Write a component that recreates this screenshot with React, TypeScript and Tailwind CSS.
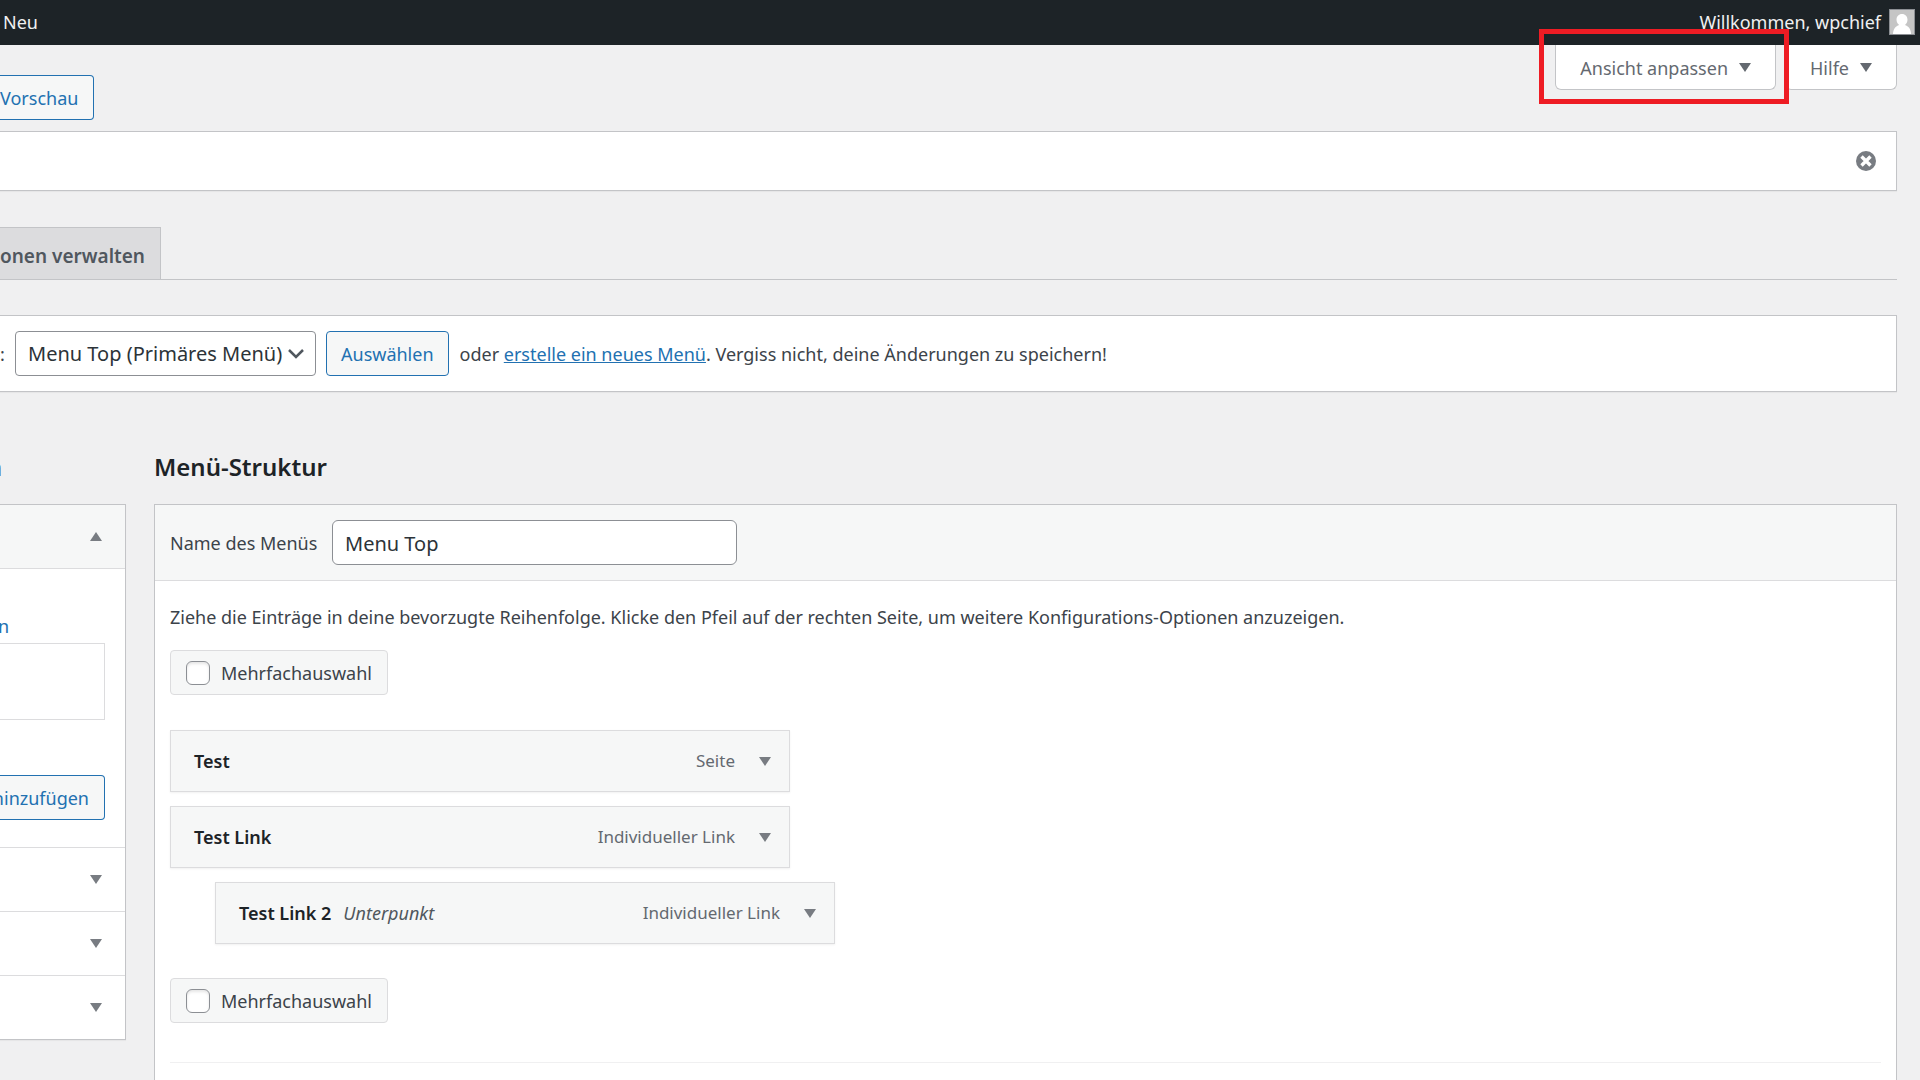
import type { ReactNode } from "react";

type MenuEntry = { title: string; kind: string; nested?: boolean };

const entries: MenuEntry[] = [
  { title: "Test", kind: "Seite" },
  { title: "Test Link", kind: "Individueller Link" },
  { title: "Test Link 2", kind: "Individueller Link", nested: true },
];

function Arrow({ up = false, className = "" }: { up?: boolean; className?: string }) {
  return (
    <svg viewBox="0 0 12 9" aria-hidden="true" className={`h-[9px] w-3 shrink-0 fill-current ${className}`}>
      <path d={up ? "M0 9 6 0l6 9z" : "M0 0h12L6 9z"} />
    </svg>
  );
}

function BulkSelect({ id }: { id: string }) {
  return (
    <label
      htmlFor={id}
      className="flex h-[45px] w-fit items-center gap-[11px] rounded-[4px] border border-[#dcdcde] bg-[#f6f7f7] px-[15px]"
    >
      <input
        id={id}
        type="checkbox"
        className="size-6 appearance-none rounded-[6px] border border-[#8c8f94] bg-white shadow-[inset_0_2px_3px_rgba(0,0,0,0.1)]"
      />
      Mehrfachauswahl
    </label>
  );
}

function MetaTab({ label, children }: { label: string; children?: ReactNode }) {
  return (
    <div className="relative">
      <button
        type="button"
        className="flex h-[45px] items-center gap-[11px] rounded-b-[6px] border border-t-0 border-[#c3c4c7] bg-white px-6 pt-px text-[#646970]"
      >
        {label}
        <Arrow />
      </button>
      {children}
    </div>
  );
}

function MenuItem({ entry }: { entry: MenuEntry }) {
  return (
    <li
      className={`flex h-[62px] w-[620px] items-center border border-[#dcdcde] bg-[#f6f7f7] pr-[18px] pl-[23px] shadow-[0_1px_2px_rgba(0,0,0,0.06)] ${
        entry.nested ? "ml-[45px]" : ""
      }`}
    >
      <span className="font-semibold text-[#1d2327]">{entry.title}</span>
      {entry.nested && <span className="ml-3 text-[#50575e] italic">Unterpunkt</span>}
      <span className="ml-auto text-[17px] text-[#646970]">{entry.kind}</span>
      <button type="button" aria-label={`${entry.title} bearbeiten`} className="ml-6 text-[#787c82]">
        <Arrow />
      </button>
    </li>
  );
}

function ClosedSection({ label }: { label: string }) {
  return (
    <button
      type="button"
      aria-label={label}
      className="flex h-16 w-full items-center justify-end border-t border-[#dcdcde] pr-[23px] text-[#787c82]"
    >
      <Arrow />
    </button>
  );
}

export default function App() {
  return (
    <div className="flex min-h-screen flex-col overflow-hidden bg-[#f0f0f1] font-['Noto_Sans','Open_Sans',sans-serif] text-[18px] leading-7 text-[#3c434a]">
      <header className="flex h-[45px] items-center justify-between bg-[#1d2327] pr-[5px] pb-px pl-[3px] text-[#f0f0f1]">
        <a href="#neu">Neu</a>
        <a href="#profil" className="flex items-center gap-2">
          Willkommen, wpchief
          <svg viewBox="0 0 26 26" aria-hidden="true" className="size-[26px]">
            <rect x=".5" y=".5" width="25" height="25" fill="#c5c5c5" stroke="#8c8f94" />
            <path d="M13 5c3.300 0 5.500 2.600 5.500 5.800 0 2.200-1 4.100-2.600 5.200 3.600.9 6 4.400 6.200 9H4c.2-4.600 2.600-8.100 6.200-9-1.600-1.100-2.700-3-2.700-5.200C7.500 7.600 9.700 5 13 5z" fill="#fff" />
          </svg>
        </a>
      </header>

      <main className="flex flex-1 flex-col pr-[23px]">
        <div className="flex items-start justify-between pb-[11px]">
          <button
            type="button"
            className="mt-[30px] h-[45px] rounded-r-[4px] border border-l-0 border-[#2271b1] bg-[#f6f7f7] pr-[15px] text-[#2271b1]"
          >
            Vorschau
          </button>
          <div className="flex gap-[9px]">
            <MetaTab label="Ansicht anpassen">
              <span className="pointer-events-none absolute -top-4 -right-[13px] -bottom-[14px] -left-4 z-10 border-[5px] border-[#ee1c24]" />
            </MetaTab>
            <MetaTab label="Hilfe" />
          </div>
        </div>

        <div className="flex h-[60px] items-center justify-end border border-l-0 border-[#c3c4c7] bg-white pr-5 shadow-[0_1px_1px_rgba(0,0,0,0.04)]">
          <button type="button" aria-label="Diese Meldung ausblenden">
            <svg viewBox="0 0 20 20" aria-hidden="true" className="size-5">
              <circle cx="10" cy="10" r="10" fill="#787c82" />
              <path d="m5.500 5.500 9 9m0-9-9 9" stroke="#fff" strokeWidth="3.400" />
            </svg>
          </button>
        </div>

        <nav className="mt-9 flex border-b border-[#c3c4c7]">
          <a
            href="#positionen"
            className="flex h-[52px] items-center border border-b-0 border-l-0 border-[#c3c4c7] bg-[#dcdcde] pt-1 pr-[15px] text-[19px] font-semibold text-[#50575e]"
          >
            onen verwalten
          </a>
        </nav>

        <form className="mt-[35px] flex h-[77px] items-center border border-l-0 border-[#c3c4c7] bg-white shadow-[0_1px_1px_rgba(0,0,0,0.04)]">
          <label htmlFor="menu" className="w-[15px]">
            :
          </label>
          <div className="relative">
            <select
              id="menu"
              className="h-[45px] w-[301px] appearance-none rounded-[4px] border border-[#8c8f94] bg-white pt-px pl-3 text-[20px] text-[#2c3338]"
            >
              <option>Menu Top (Primäres Menü)</option>
            </select>
            <svg
              viewBox="0 0 16 10"
              aria-hidden="true"
              className="pointer-events-none absolute top-[18px] right-3 h-[10px] w-4 fill-none stroke-[#50575e]"
            >
              <path d="m1 1 7 7 7-7" strokeWidth="2.500" />
            </svg>
          </div>
          <button
            type="button"
            className="ml-[10px] h-[45px] rounded-[4px] border border-[#2271b1] bg-[#f6f7f7] px-[14px] text-[#2271b1]"
          >
            Auswählen
          </button>
          <p className="ml-[11px]">
            oder{" "}
            <a href="#neues-menue" className="text-[#2271b1] underline">
              erstelle ein neues Menü
            </a>
            . Vergiss nicht, deine Änderungen zu speichern!
          </p>
        </form>

        <div className="mt-[59px] flex flex-1 gap-7">
          <aside className="w-[126px] shrink-0">
            <h2 className="h-[53px] text-[24px] leading-8 font-semibold text-[#1d2327]">
              <span className="flex w-[2px] justify-end overflow-hidden">n</span>
            </h2>
            <div className="border border-l-0 border-[#c3c4c7] bg-white shadow-[0_1px_1px_rgba(0,0,0,0.04)]">
              <button
                type="button"
                aria-label="Seiten"
                className="flex h-16 w-full items-center justify-end border-b border-[#dcdcde] bg-[#f6f7f7] pr-[23px] text-[#787c82]"
              >
                <Arrow up />
              </button>
              <div className="flex flex-col items-start pt-[43px] pr-5 pb-[27px]">
                <a href="#anzeigen" className="flex w-[9px] justify-end overflow-hidden text-[#2271b1]">
                  n
                </a>
                <div className="mt-[3px] h-[77px] w-full border border-l-0 border-[#dcdcde]" />
                <button
                  type="button"
                  className="mt-[55px] flex h-[45px] w-full items-center justify-end overflow-hidden rounded-r-[4px] border border-l-0 border-[#2271b1] bg-[#f6f7f7] pr-[15px] text-[#2271b1]"
                >
                  hinzufügen
                </button>
              </div>
              <ClosedSection label="Beiträge" />
              <ClosedSection label="Individuelle Links" />
              <ClosedSection label="Kategorien" />
            </div>
          </aside>

          <section className="flex flex-1 flex-col">
            <h2 className="h-[53px] text-[24px] leading-8 font-semibold text-[#1d2327]">Menü-Struktur</h2>
            <div className="flex-1 border border-b-0 border-[#c3c4c7] bg-white">
              <div className="flex h-[76px] items-center border-b border-[#dcdcde] bg-[#f6f7f7] pl-[15px]">
                <label htmlFor="menu-name" className="w-[162px] pt-px">
                  Name des Menüs
                </label>
                <input
                  id="menu-name"
                  type="text"
                  defaultValue="Menu Top"
                  className="h-[45px] w-[405px] rounded-[6px] border border-[#8c8f94] bg-white px-3 pt-[2px] text-[20px] text-[#2c3338]"
                />
              </div>
              <div className="px-[15px] pt-[22px] pb-4">
                <p className="mb-[19px]">
                  Ziehe die Einträge in deine bevorzugte Reihenfolge. Klicke den Pfeil auf der rechten Seite, um weitere
                  Konfigurations-Optionen anzuzeigen.
                </p>
                <BulkSelect id="bulk-top" />
                <ul className="mt-[35px] mb-[34px] flex flex-col gap-[14px]">
                  {entries.map((entry) => (
                    <MenuItem key={entry.title} entry={entry} />
                  ))}
                </ul>
                <BulkSelect id="bulk-bottom" />
                <hr className="mt-[39px] border-[#f0f0f1]" />
              </div>
            </div>
          </section>
        </div>
      </main>
    </div>
  );
}
